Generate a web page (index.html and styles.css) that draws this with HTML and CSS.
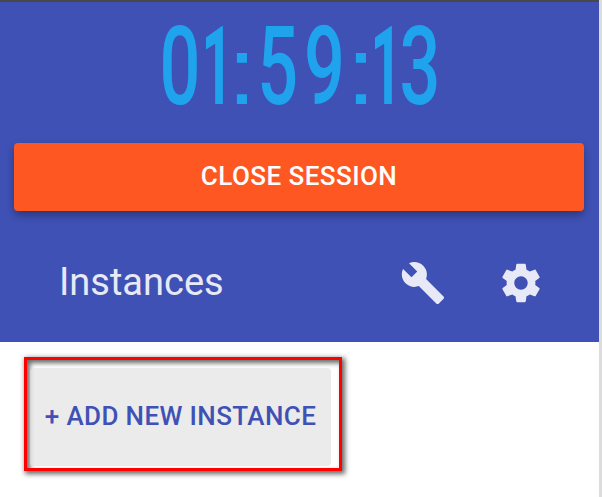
FILE: index.html
```
<!DOCTYPE html>
<html lang="en">
<head>
<meta charset="utf-8">
<title>Instances</title>
<link rel="stylesheet" href="styles.css">
</head>
<body>
<aside class="panel">
  <header class="session">
    <svg class="clock" width="290" height="128" viewBox="0 -12 290 128" role="timer">
      <text class="digits" transform="scale(.66 1)" y="90" x="8.5">0</text>
      <text class="digits one" transform="scale(.5 1)" y="90" x="95">1</text>
      <text class="colon" transform="scale(1.1 1)" y="90" x="66.6">:</text>
      <text class="digits" transform="scale(.66 1)" y="90" x="156.3 227.3">59</text>
      <text class="colon" transform="scale(1.1 1)" y="90" x="174.8">:</text>
      <text class="digits one" transform="scale(.5 1)" y="90" x="433">1</text>
      <text class="digits" transform="scale(.66 1)" y="90" x="372">3</text>
    </svg>
    <button class="close">CLOSE SESSION</button>
    <div class="toolbar">
      <h1 class="title">Instances</h1>
      <button class="icon-button" aria-label="Tools"><svg class="icon" viewBox="0 0 24 24"><path d="M22.7 19l-9.1-9.1c.9-2.3.4-5-1.5-6.9-2-2-5-2.4-7.4-1.3L9 6 6 9 1.6 4.7C.4 7.1.9 10.1 2.9 12.1c1.9 1.9 4.6 2.4 6.9 1.5l9.1 9.1c.4.4 1 .4 1.4 0l2.3-2.3c.5-.4.5-1.1.1-1.4z"/></svg></button>
      <button class="icon-button" aria-label="Settings"><svg class="icon" viewBox="0 0 24 24"><path d="M19.43 12.98c.04-.32.07-.64.07-.98s-.03-.66-.07-.98l2.11-1.65c.19-.15.24-.42.12-.64l-2-3.46c-.12-.22-.39-.3-.61-.22l-2.49 1c-.52-.4-1.08-.73-1.69-.98l-.38-2.65C14.46 2.18 14.25 2 14 2h-4c-.25 0-.46.18-.49.42l-.38 2.65c-.61.25-1.17.59-1.69.98l-2.49-1c-.23-.09-.49 0-.61.22l-2 3.46c-.13.22-.07.49.12.64l2.11 1.65c-.04.32-.07.65-.07.98s.03.66.07.98l-2.11 1.65c-.19.15-.24.42-.12.64l2 3.46c.12.22.39.3.61.22l2.49-1c.52.4 1.08.73 1.69.98l.38 2.65c.03.24.24.42.49.42h4c.25 0 .46-.18.49-.42l.38-2.65c.61-.25 1.17-.59 1.69-.98l2.49 1c.23.09.49 0 .61-.22l2-3.46c.12-.22.07-.49-.12-.64l-2.11-1.65zM12 15.5c-1.93 0-3.5-1.57-3.5-3.5s1.57-3.5 3.5-3.5 3.5 1.57 3.5 3.5-1.57 3.5-3.5 3.5z"/></svg></button>
    </div>
  </header>
  <main class="content">
    <div class="highlight"><button class="add">+ ADD NEW INSTANCE</button></div>
  </main>
</aside>
</body>
</html>
```
FILE: styles.css
```
* { box-sizing: border-box; }
body {
  margin: 0;
  height: 497px;
  overflow: hidden;
  background: #dcdcdc;
  font-family: Roboto, sans-serif;
}
button {
  border: 0;
  padding: 0;
  font-family: inherit;
}
.panel {
  width: 599px;
  height: 497px;
  background: #fff;
}
.session {
  height: 342px;
  border-top: 2px solid #484848;
  background: #3f51b5;
  padding: 0 15px 0 14px;
}
.clock {
  display: block;
  margin: 0 auto;
  overflow: visible;
  fill: #1fa3ec;
}
.digits {
  font-family: Roboto, sans-serif;
  font-size: 109px;
  font-weight: 500;
}
.one { font-weight: 700; }
.colon {
  font-family: "Liberation Sans", sans-serif;
  font-size: 96px;
}
.close {
  display: block;
  width: 100%;
  height: 68px;
  margin-top: 13px;
  border-radius: 4px;
  background: #ff5722;
  color: #fff;
  font-size: 26px;
  font-weight: 500;
  letter-spacing: .44px;
  padding-bottom: 2px;
  line-height: 66px;
  box-shadow: 0 6px 10px -2px rgba(0, 0, 0, .2), 0 3px 8px rgba(0, 0, 0, .2);
}
.toolbar {
  display: flex;
  align-items: center;
  height: 46px;
  margin-top: 49px;
  padding: 0 40px 0 45px;
}
.title {
  flex: 1;
  margin: 0;
  color: #e7e9f6;
  font-size: 38px;
  font-weight: 400;
  line-height: 44px;
  padding-bottom: 2px;
}
.icon-button {
  width: 46px;
  height: 46px;
  margin-left: 52px;
  background: none;
}
.icon {
  display: block;
  width: 46px;
  height: 46px;
  fill: #e7e9f6;
}
.content { padding: 15px 24px; }
.highlight {
  width: 318px;
  height: 114px;
  border: 3px solid #f00;
  padding: 8px 8px 2px 3px;
  box-shadow: 2px 2px 5px 1px rgba(0, 0, 0, .6), inset 3px 3px 5px rgba(0, 0, 0, .6);
}
.add {
  display: block;
  width: 100%;
  height: 98px;
  border-radius: 4px;
  background: rgba(225, 225, 225, .68);
  color: #3f51b5;
  font-size: 26px;
  font-weight: 500;
  letter-spacing: .38px;
  padding-bottom: 2px;
  line-height: 96px;
  white-space: nowrap;
}
```
